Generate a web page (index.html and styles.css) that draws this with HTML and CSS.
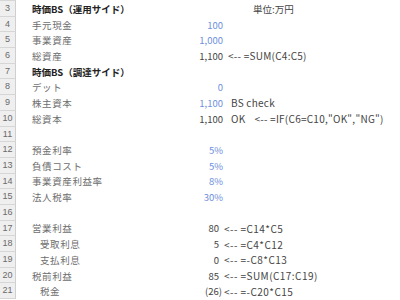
FILE: index.html
```html
<!DOCTYPE html>
<html lang="ja">
<head>
<meta charset="utf-8">
<link rel="stylesheet" href="styles.css">
</head>
<body>
<div class="sheet">
  <div class="row top"><div class="rh"></div></div>
  <div class="row"><div class="rh">3</div><div class="lab b">時価BS（運用サイド）</div><div class="val"></div><div class="note unit">単位:万円</div></div>
  <div class="row"><div class="rh">4</div><div class="lab">手元現金</div><div class="val blue">100</div></div>
  <div class="row"><div class="rh">5</div><div class="lab">事業資産</div><div class="val blue">1,000</div></div>
  <div class="row"><div class="rh">6</div><div class="lab">総資産</div><div class="val">1,100</div><div class="note">&lt;-- =SUM(C4:C5)</div></div>
  <div class="row"><div class="rh">7</div><div class="lab b">時価BS（調達サイド）</div></div>
  <div class="row"><div class="rh">8</div><div class="lab">デット</div><div class="val blue">0</div></div>
  <div class="row"><div class="rh">9</div><div class="lab">株主資本</div><div class="val blue">1,100</div><div class="note chk">BS check</div></div>
  <div class="row"><div class="rh">10</div><div class="lab">総資本</div><div class="val">1,100</div><div class="note ok">OK</div><div class="note f">&lt;-- =IF(C6=C10,"OK","NG")</div></div>
  <div class="row"><div class="rh">11</div></div>
  <div class="row"><div class="rh">12</div><div class="lab">預金利率</div><div class="val blue">5%</div></div>
  <div class="row"><div class="rh">13</div><div class="lab">負債コスト</div><div class="val blue">5%</div></div>
  <div class="row"><div class="rh">14</div><div class="lab">事業資産利益率</div><div class="val blue">8%</div></div>
  <div class="row"><div class="rh">15</div><div class="lab">法人税率</div><div class="val blue">30%</div></div>
  <div class="row"><div class="rh">16</div></div>
  <div class="row"><div class="rh">17</div><div class="lab">営業利益</div><div class="val acct">80</div><div class="note a">&lt;-- =C14*C5</div></div>
  <div class="row"><div class="rh">18</div><div class="lab ind">受取利息</div><div class="val acct">5</div><div class="note a">&lt;-- =C4*C12</div></div>
  <div class="row"><div class="rh">19</div><div class="lab ind">支払利息</div><div class="val acct">0</div><div class="note a">&lt;-- =-C8*C13</div></div>
  <div class="row"><div class="rh">20</div><div class="lab">税前利益</div><div class="val acct">85</div><div class="note a">&lt;-- =SUM(C17:C19)</div></div>
  <div class="row"><div class="rh">21</div><div class="lab ind">税金</div><div class="val acct neg">(26)</div><div class="note a">&lt;-- =-C20*C15</div></div>
</div>
</body>
</html>
```
FILE: styles.css
```css
html, body {
  margin: 0;
  padding: 0;
  background: #ffffff;
}
body {
  font-family: "Noto Sans CJK JP", "Noto Sans", sans-serif;
  font-size: 9.5px;
  color: #666666;
}
.sheet {
  display: flex;
  flex-direction: column;
  width: 400px;
  height: 300px;
  overflow: hidden;
}
.row {
  display: flex;
  align-items: center;
  height: 15.7px;
  flex: none;
  white-space: nowrap;
}
.row.top {
  height: 1px;
}
.rh {
  width: 16px;
  height: 100%;
  box-sizing: border-box;
  flex: none;
  background: #efefef;
  border-right: 1px solid #cfcfcf;
  border-bottom: 1px solid #d6d6d6;
  color: #6a6a6a;
  font-family: "Liberation Sans", sans-serif;
  font-size: 9px;
  text-align: center;
  line-height: 15px;
}
.lab {
  width: 157px;
  padding-left: 16px;
  box-sizing: border-box;
  flex: none;
  color: #6e6e6e;
  letter-spacing: 0.6px;
}
.lab.b {
  font-weight: bold;
  color: #222222;
  letter-spacing: 0;
}
.lab.ind {
  padding-left: 24px;
}
.val {
  width: 50px;
  flex: none;
  text-align: right;
  color: #444444;
}
.val.blue {
  color: #6f8fdc;
}
.val.acct {
  width: 46px;
}
.val.neg {
  margin-right: -3px;
  width: 49px;
}
.note {
  color: #444444;
  margin-left: 5px;
  font-size: 10px;
  letter-spacing: 0.25px;
}
.note.unit {
  margin-left: 30px;
  font-size: 9.5px;
  letter-spacing: 0;
}
.note.chk {
  margin-left: 8px;
}
.note.ok {
  margin-left: 8px;
}
.note.f {
  margin-left: 9px;
}
.note.a {
  margin-left: 5px;
  letter-spacing: 0.45px;
}
```
